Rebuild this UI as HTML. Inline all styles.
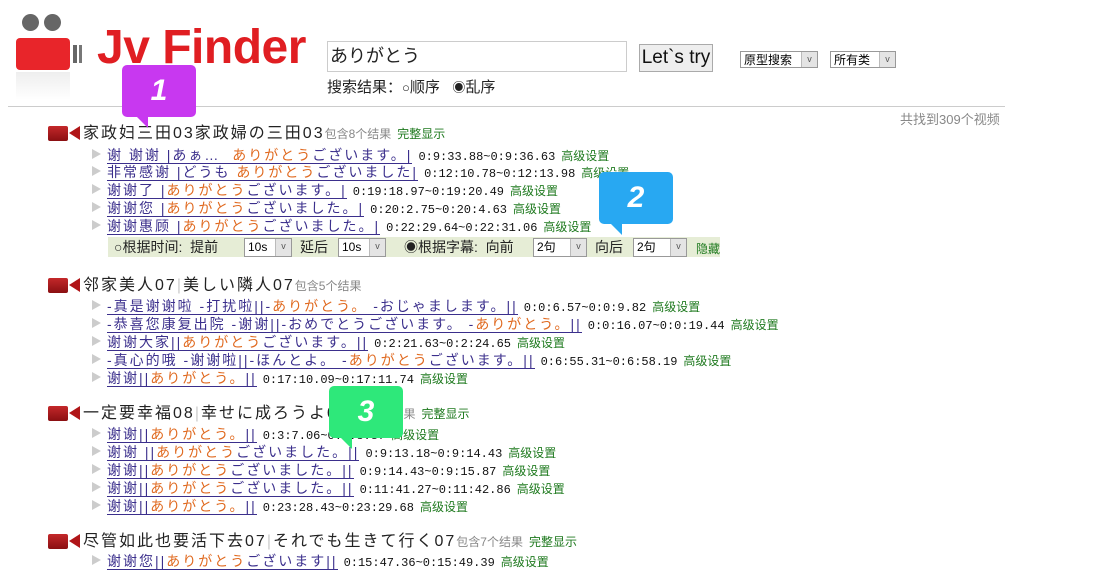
<!DOCTYPE html>
<html><head><meta charset="utf-8">
<style>
body{margin:0;width:1119px;height:569px;background:#fff;position:relative;overflow:hidden;font-family:"Liberation Sans","Noto Sans CJK SC",sans-serif;}
.a{position:absolute;white-space:nowrap;}
.t{font-size:16px;color:#222;line-height:18px;letter-spacing:2px;}
.t .m{font-size:12px;color:#888;letter-spacing:0;}
.t .g{font-size:12px;color:#1f7a1f;margin-left:6px;letter-spacing:0;}
.t .sep{color:#ccc;}
.ic{position:absolute;width:20px;height:15px;background:linear-gradient(#c4282a,#8a0f12);border-radius:2px;}
.ic:after{content:"";position:absolute;left:21px;top:0;border-style:solid;border-width:7.5px 11px 7.5px 0;border-color:transparent #b01518 transparent transparent;}
.r{font-size:14px;line-height:17px;color:#3b2f8c;}
.r .tri{display:inline-block;width:0;height:0;border-style:solid;border-width:5px 0 5px 9px;border-color:transparent transparent transparent #ccc;margin-right:6px;vertical-align:1px;}
.r .u{border-bottom:1px solid #3b2f8c;letter-spacing:2px;}
.r .o{color:#e06a20;}
.r .tm{font-family:"Liberation Mono",monospace;font-size:12px;color:#111;margin-left:6px;}
.r .g{font-size:12px;color:#1f7a1f;margin-left:6px;}
.bub{position:absolute;width:74px;height:52px;border-radius:5px;color:#fff;font:italic bold 30px "Liberation Sans",sans-serif;text-align:center;line-height:52px;}
.sel{position:absolute;height:17px;border:1px solid #999;background:#fff;font-size:12px;line-height:17px;padding-left:3px;box-sizing:border-box;}
.sel b{position:absolute;right:0;top:0;width:15px;height:15px;background:#e4e4e4;border-left:1px solid #bbb;font-weight:normal;font-size:9px;text-align:center;line-height:15px;color:#555;}
</style></head><body>

<div class="a" style="left:22px;top:14px;width:17px;height:17px;border-radius:50%;background:#666"></div>
<div class="a" style="left:44px;top:14px;width:17px;height:17px;border-radius:50%;background:#666"></div>
<div class="a" style="left:16px;top:38px;width:54px;height:32px;border-radius:4px;background:#e8252a"></div>
<div class="a" style="left:73px;top:45px;width:4px;height:18px;background:#666"></div>
<div class="a" style="left:79px;top:45px;width:3px;height:18px;background:#777"></div>
<div class="a" style="left:16px;top:72px;width:54px;height:28px;background:linear-gradient(#eee,#fff)"></div>
<div class="a" style="left:97px;top:15px;font:bold 48px 'Liberation Sans',sans-serif;color:#e01e22;letter-spacing:-0.5px;line-height:66px">Jv Finder</div>

<div class="a" style="left:327px;top:41px;width:300px;height:31px;border:1px solid #ccc;box-sizing:border-box;font-size:18px;line-height:29px;padding-left:2px;color:#222">ありがとう</div>
<div class="a" style="left:639px;top:44px;width:74px;height:28px;border:1px solid #aaa;background:#eee;box-sizing:border-box;font-size:19px;line-height:26px;text-align:center;color:#111">Let`s try</div>
<div class="sel" style="left:740px;top:51px;width:78px">原型搜索<b>v</b></div>
<div class="sel" style="left:830px;top:51px;width:66px">所有类<b>v</b></div>
<div class="a" style="left:327px;top:76px;font-size:15px;color:#222">搜索结果：<span style="font-size:13px">○</span>顺序 &nbsp;&nbsp;<span style="font-size:13px">◉</span>乱序</div>
<div class="a" style="left:8px;top:106px;width:997px;height:1px;background:#ccc"></div>
<div class="a" style="left:900px;top:109px;font-size:13px;color:#888">共找到309个视频</div>

<div class="ic" style="left:48px;top:126px"></div>
<div class="a t" style="left:83px;top:125px">家政妇三田03家政婦の三田03<span class="m">包含8个结果</span><span class="g">完整显示</span></div>
<div class="a r" style="left:92px;top:147px"><span class="tri"></span><span class="u">谢 谢谢 |あぁ… &nbsp;<span class="o">ありがとう</span>ございます。|</span><span class="tm">0:9:33.88~0:9:36.63</span><span class="g">高级设置</span></div>
<div class="a r" style="left:92px;top:164px"><span class="tri"></span><span class="u">非常感谢 |どうも <span class="o">ありがとう</span>ございました|</span><span class="tm">0:12:10.78~0:12:13.98</span><span class="g">高级设置</span></div>
<div class="a r" style="left:92px;top:182px"><span class="tri"></span><span class="u">谢谢了 |<span class="o">ありがとう</span>ございます。|</span><span class="tm">0:19:18.97~0:19:20.49</span><span class="g">高级设置</span></div>
<div class="a r" style="left:92px;top:200px"><span class="tri"></span><span class="u">谢谢您 |<span class="o">ありがとう</span>ございました。|</span><span class="tm">0:20:2.75~0:20:4.63</span><span class="g">高级设置</span></div>
<div class="a r" style="left:92px;top:218px"><span class="tri"></span><span class="u">谢谢惠顾 |<span class="o">ありがとう</span>ございました。|</span><span class="tm">0:22:29.64~0:22:31.06</span><span class="g">高级设置</span></div>
<div class="a" style="left:108px;top:237px;width:612px;height:20px;background:#e6edd6"></div>
<div class="a" style="left:114px;top:238px;font-size:14px;line-height:18px;color:#222">○根据时间: &nbsp;提前</div>
<div class="sel" style="left:244px;top:238px;width:48px;height:19px">10s<b style="height:17px">v</b></div>
<div class="a" style="left:300px;top:238px;font-size:14px;line-height:18px;color:#222">延后</div>
<div class="sel" style="left:338px;top:238px;width:48px;height:19px">10s<b style="height:17px">v</b></div>
<div class="a" style="left:404px;top:238px;font-size:14px;line-height:18px;color:#222">◉根据字幕: &nbsp;向前</div>
<div class="sel" style="left:533px;top:238px;width:54px;height:19px">2句<b style="height:17px">v</b></div>
<div class="a" style="left:595px;top:238px;font-size:14px;line-height:18px;color:#222">向后</div>
<div class="sel" style="left:633px;top:238px;width:54px;height:19px">2句<b style="height:17px">v</b></div>
<div class="a" style="left:696px;top:240px;font-size:12px;color:#1f7a1f">隐藏</div>

<div class="ic" style="left:48px;top:278px"></div>
<div class="a t" style="left:83px;top:277px">邻家美人07<span class="sep">|</span>美しい隣人07<span class="m">包含5个结果</span></div>
<div class="a r" style="left:92px;top:298px"><span class="tri"></span><span class="u">-真是谢谢啦 -打扰啦||-<span class="o">ありがとう。</span> -おじゃまします。||</span><span class="tm">0:0:6.57~0:0:9.82</span><span class="g">高级设置</span></div>
<div class="a r" style="left:92px;top:316px"><span class="tri"></span><span class="u">-恭喜您康复出院 -谢谢||-おめでとうございます。 -<span class="o">ありがとう。</span>||</span><span class="tm">0:0:16.07~0:0:19.44</span><span class="g">高级设置</span></div>
<div class="a r" style="left:92px;top:334px"><span class="tri"></span><span class="u">谢谢大家||<span class="o">ありがとう</span>ございます。||</span><span class="tm">0:2:21.63~0:2:24.65</span><span class="g">高级设置</span></div>
<div class="a r" style="left:92px;top:352px"><span class="tri"></span><span class="u">-真心的哦 -谢谢啦||-ほんとよ。 -<span class="o">ありがとう</span>ございます。||</span><span class="tm">0:6:55.31~0:6:58.19</span><span class="g">高级设置</span></div>
<div class="a r" style="left:92px;top:370px"><span class="tri"></span><span class="u">谢谢||<span class="o">ありがとう。</span>||</span><span class="tm">0:17:10.09~0:17:11.74</span><span class="g">高级设置</span></div>

<div class="ic" style="left:48px;top:406px"></div>
<div class="a t" style="left:83px;top:405px">一定要幸福08<span class="sep">|</span>幸せに成ろうよ08<span class="m">包含6个结果</span><span class="g">完整显示</span></div>
<div class="a r" style="left:92px;top:426px"><span class="tri"></span><span class="u">谢谢||<span class="o">ありがとう。</span>||</span><span class="tm">0:3:7.06~0:3:8.37</span><span class="g">高级设置</span></div>
<div class="a r" style="left:92px;top:444px"><span class="tri"></span><span class="u">谢谢 ||<span class="o">ありがとう</span>ございました。||</span><span class="tm">0:9:13.18~0:9:14.43</span><span class="g">高级设置</span></div>
<div class="a r" style="left:92px;top:462px"><span class="tri"></span><span class="u">谢谢||<span class="o">ありがとう</span>ございました。||</span><span class="tm">0:9:14.43~0:9:15.87</span><span class="g">高级设置</span></div>
<div class="a r" style="left:92px;top:480px"><span class="tri"></span><span class="u">谢谢||<span class="o">ありがとう</span>ございました。||</span><span class="tm">0:11:41.27~0:11:42.86</span><span class="g">高级设置</span></div>
<div class="a r" style="left:92px;top:498px"><span class="tri"></span><span class="u">谢谢||<span class="o">ありがとう。</span>||</span><span class="tm">0:23:28.43~0:23:29.68</span><span class="g">高级设置</span></div>

<div class="ic" style="left:48px;top:534px"></div>
<div class="a t" style="left:83px;top:533px">尽管如此也要活下去07<span class="sep">|</span>それでも生きて行く07<span class="m">包含7个结果</span><span class="g">完整显示</span></div>
<div class="a r" style="left:92px;top:553px"><span class="tri"></span><span class="u">谢谢您||<span class="o">ありがとう</span>ございます||</span><span class="tm">0:15:47.36~0:15:49.39</span><span class="g">高级设置</span></div>

<div class="bub" style="left:122px;top:65px;background:#c838f0">1</div>
<div class="a" style="left:136px;top:116px;border-style:solid;border-width:0 12px 12px 0;border-color:transparent #c838f0 transparent transparent"></div>
<div class="bub" style="left:599px;top:172px;background:#28a8f2">2</div>
<div class="a" style="left:610px;top:223px;border-style:solid;border-width:0 12px 12px 0;border-color:transparent #28a8f2 transparent transparent"></div>
<div class="bub" style="left:329px;top:386px;background:#2ee87a">3</div>
<div class="a" style="left:340px;top:437px;border-style:solid;border-width:0 12px 12px 0;border-color:transparent #2ee87a transparent transparent"></div>
</body></html>
